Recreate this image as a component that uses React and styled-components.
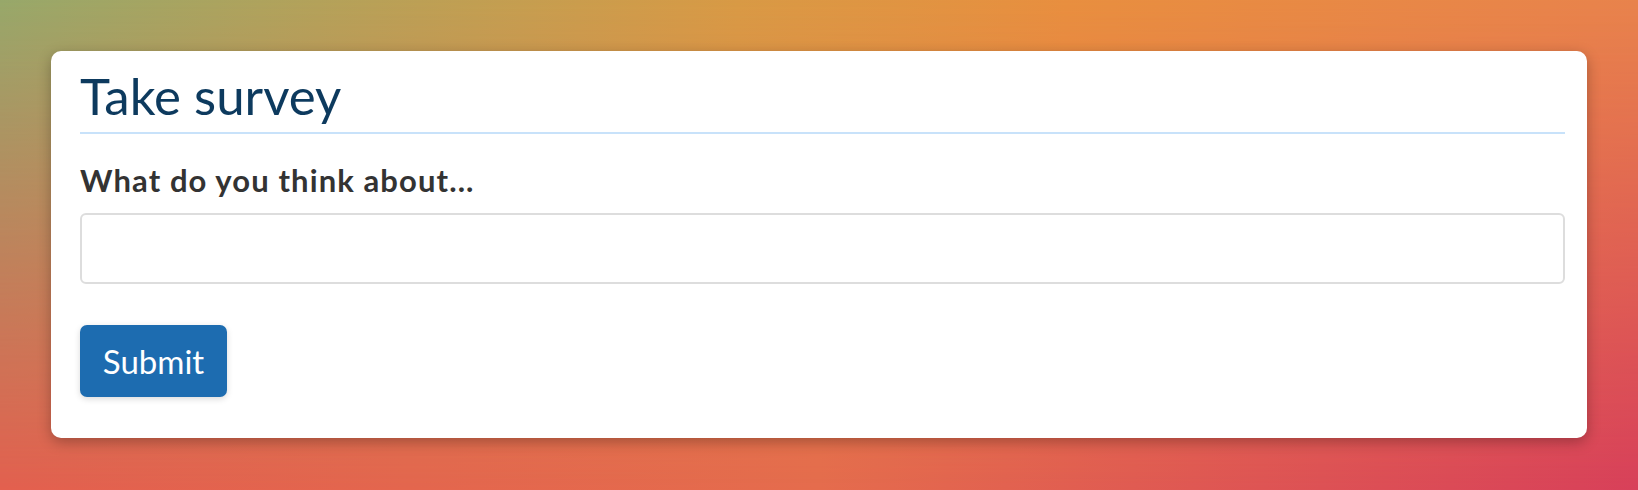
import styled, { createGlobalStyle } from "styled-components";

const GlobalStyle = createGlobalStyle`
    html, body {
        margin: 0;
        padding: 0;
    }
    body {
        font-family: "Lato", "Open Sans", sans-serif;
    }
    * {
        box-sizing: border-box;
    }
`

const Survey = () => {
    return (
        <Page>
            <GlobalStyle />
            <Card>
                <Title>Take survey</Title>
                <Form onSubmit={(e) => e.preventDefault()}>
                    <Label htmlFor="answer">What do you think about...</Label>
                    <Input id="answer" type="text" />
                    <SubmitButton type="submit">Submit</SubmitButton>
                </Form>
            </Card>
        </Page>
    )
}

const Page = styled.div`
    position: relative;
    min-height: 100vh;
    padding: 51px;
    background: linear-gradient(to right, #e3604f, #e56c4d 50%, #d8405a);
    isolation: isolate;

    /* top row of the backdrop, faded downwards over the warm bottom row */
    &::before {
        content: "";
        position: absolute;
        inset: 0;
        z-index: -1;
        background: linear-gradient(to right, #97a86a, #d89a45 45%, #e88f3f 65%, #e8834c);
        -webkit-mask-image: linear-gradient(to bottom, black, transparent);
        mask-image: linear-gradient(to bottom, black, transparent);
    }
`

const Card = styled.div`
    background: #fff;
    border-radius: 10px;
    padding: 14px 22px 41px 29px;
    box-shadow: 0 4px 14px rgba(0, 0, 0, 0.28);
`

const Title = styled.h1`
    margin: 0;
    font-size: 51px;
    font-weight: 400;
    line-height: 62px;
    color: #0d3a5e;
    padding-bottom: 5px;
    border-bottom: 2px solid #c8e2fa;
`

const Form = styled.form`
    display: flex;
    flex-direction: column;
    align-items: flex-start;
    padding-top: 28px;
`

const Label = styled.label`
    font-size: 31px;
    font-weight: 700;
    line-height: 36px;
    letter-spacing: 1.1px;
    color: #333;
    margin-bottom: 15px;
`

const Input = styled.input`
    width: 100%;
    height: 71px;
    border: 2px solid #ddd;
    border-radius: 6px;
    padding: 0 16px;
    font: inherit;
    font-size: 30px;
    outline: none;
`

const SubmitButton = styled.button`
    margin-top: 41px;
    width: 147px;
    height: 72px;
    border: none;
    border-radius: 7px;
    background: #1d6cb0;
    color: #fff;
    font-family: inherit;
    font-size: 33px;
    box-shadow: 0 2px 6px rgba(0, 0, 0, 0.15);
    cursor: pointer;
`

export default Survey
